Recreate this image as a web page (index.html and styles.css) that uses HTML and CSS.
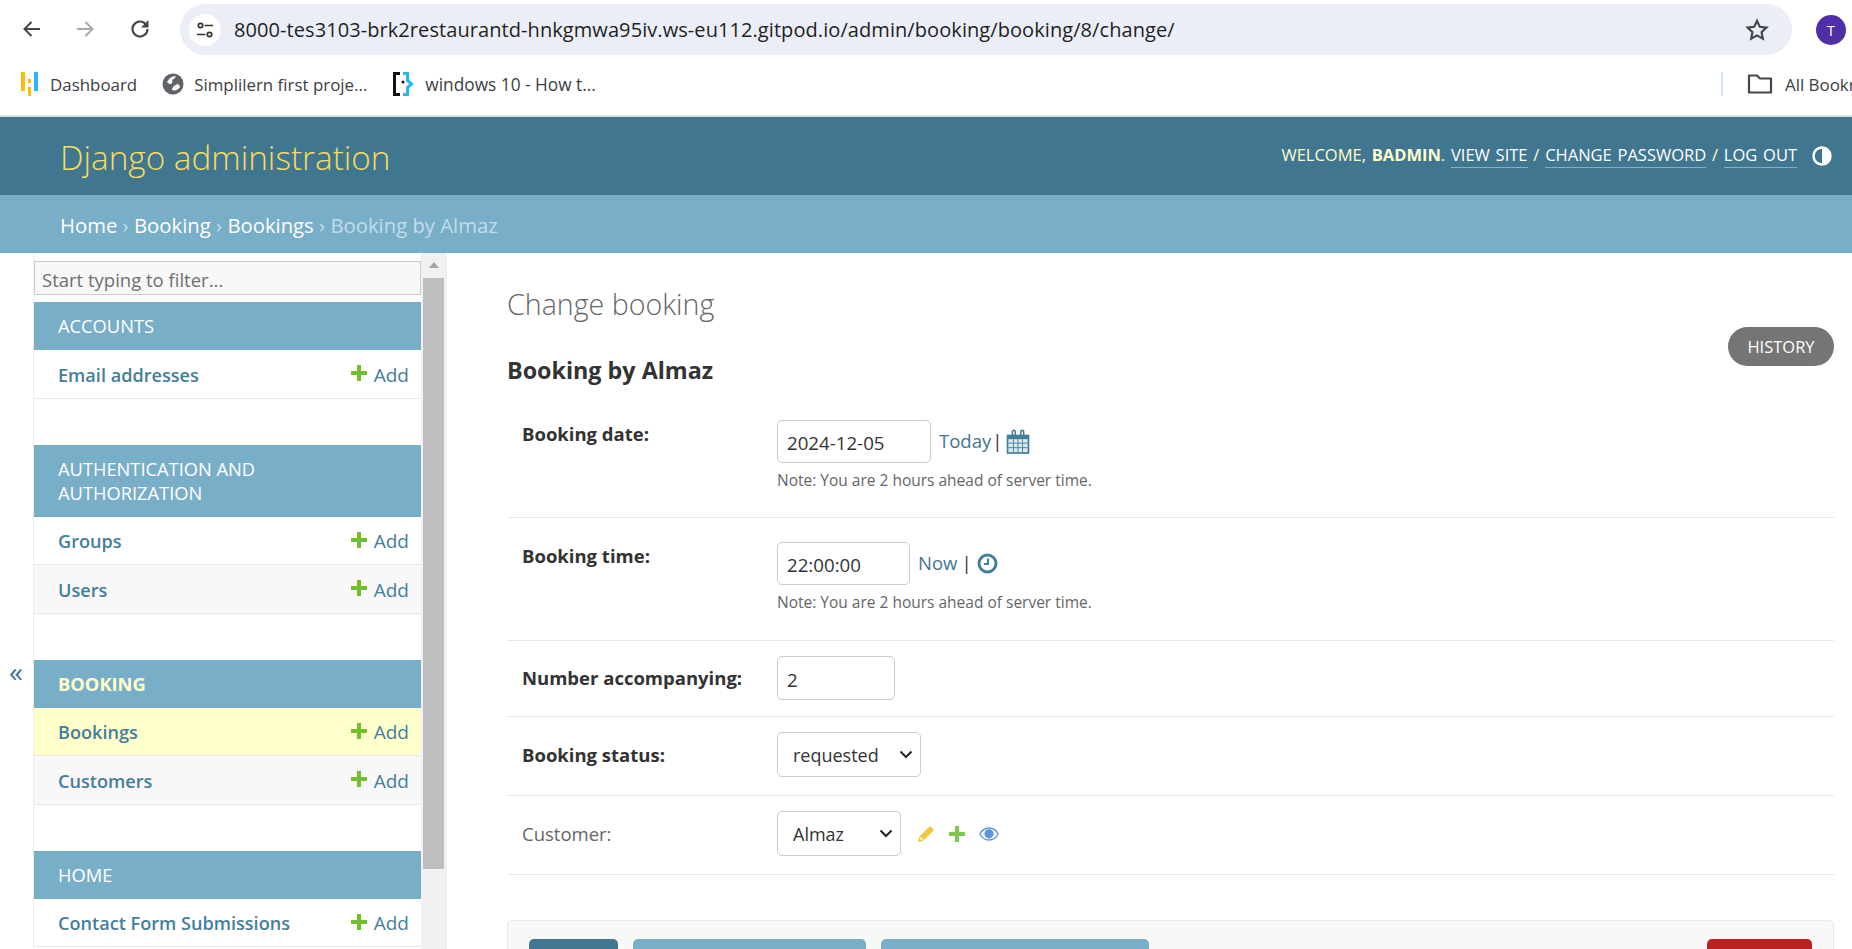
FILE: index.html
```html
<!doctype html>
<html lang="en">
  <head>
    <meta charset="UTF-8" />
    <meta name="viewport" content="width=device-width, initial-scale=1.0" />
    <title>Change booking | Django site admin</title>
    <link rel="stylesheet" href="styles.css">
  </head>
  <body>
    <div class="toolbar">
      <svg class="tool-icon" width="24" height="24" viewBox="0 0 24 24"><path d="M20 12H5M11.5 5L4.5 12l7 7" fill="none" stroke="#474747" stroke-width="2"/></svg>
      <svg class="tool-icon forward" width="24" height="24" viewBox="0 0 24 24"><path d="M4 12h15M12.5 5l7 7-7 7" fill="none" stroke="#a8a8a8" stroke-width="2"/></svg>
      <svg class="tool-icon reload" width="24" height="24" viewBox="0 0 24 24"><path d="M19.5 12a7.5 7.5 0 1 1-2.3-5.4L19 8.5" fill="none" stroke="#474747" stroke-width="2.2"/><path d="M20.5 3v7.5H13z" fill="#474747"/></svg>
      <div class="omnibox">
        <span class="site-btn">
          <svg width="20" height="20" viewBox="0 0 20 20"><g fill="none" stroke="#333" stroke-width="1.7"><circle cx="5.5" cy="5.5" r="2.2"/><circle cx="14.5" cy="14.5" r="2.2"/><path d="M9.5 5.5H18M2 14.5h8.5"/></g></svg>
        </span>
        <span class="url">8000-tes3103-brk2restaurantd-hnkgmwa95iv.ws-eu112.gitpod.io/admin/booking/booking/8/change/</span>
        <svg class="star" width="26" height="26" viewBox="0 0 24 24"><path d="M12 3.5l2.6 5.6 6.1.7-4.5 4.2 1.2 6L12 17l-5.4 3 1.2-6-4.5-4.2 6.1-.7z" fill="none" stroke="#474747" stroke-width="2"/></svg>
      </div>
      <span class="avatar">T</span>
    </div>

    <div class="bookmarks">
      <a class="bookmark dash">
        <svg width="17" height="24" viewBox="0 0 17 24"><rect x="0" y="0" width="4" height="19" fill="#fbbc04"/><rect x="7" y="7" width="3" height="4" fill="#fbbc04"/><rect x="7" y="15" width="3" height="9" fill="#fbbc04"/><rect x="13" y="0" width="4" height="19" fill="#29b6f6"/></svg>
        Dashboard
      </a>
      <a class="bookmark globe">
        <svg width="22" height="22" viewBox="0 0 22 22"><circle cx="11" cy="11" r="10.5" fill="#5f6368"/><path d="M5 9c2-4 5-6 9-6-1 2-2 3-4 4 1 2 0 4-2 4-1 0-2-1-3-2zM10 17c0-3 3-5 6-6 1 1 2 2 2 3-2 3-5 4-8 3z" fill="#fff"/></svg>
        Simplilern first proje...
      </a>
      <a class="bookmark stack">
        <svg width="21" height="24" viewBox="0 0 21 24"><path d="M7 1.5H1.5v21H7" fill="none" stroke="#111" stroke-width="3"/><path d="M10 1.5h4.5v7l4 3.5-4 3.5v7H10" fill="none" stroke="#29b6f6" stroke-width="3"/><circle cx="10" cy="10" r="1.5" fill="#111"/></svg>
        windows 10 - How t...
      </a>
      <span class="bookmark-sep"></span>
      <a class="bookmark all">
        <svg width="26" height="24" viewBox="0 0 26 24"><path d="M2 3.5h8l3 3h11v14H2z" fill="none" stroke="#474747" stroke-width="2.2" stroke-linejoin="round"/></svg>
        All Bookmarks
      </a>
    </div>

    <div class="page">
      <header class="site-header">
        <div class="branding">Django administration</div>
        <div class="user-tools">
          <span>WELCOME, <strong>BADMIN</strong>. <a>VIEW SITE</a> / <a>CHANGE PASSWORD</a> / <a>LOG OUT</a></span>
          <svg class="theme" width="20" height="20" viewBox="0 0 20 20"><circle cx="10" cy="10" r="8.5" fill="none" stroke="#fff" stroke-width="2.5"/><path d="M10 1.5a8.5 8.5 0 0 1 0 17z" fill="#fff"/></svg>
        </div>
      </header>
      <nav class="breadcrumbs">
        <a>Home</a> <i>›</i> <a>Booking</a> <i>›</i> <a>Bookings</a> <i>›</i> Booking by Almaz
      </nav>

      <div class="main">
        <div class="toggle"><a>«</a></div>

        <aside class="sidebar">
          <div class="sidebar-list">
            <input class="filter" placeholder="Start typing to filter...">

            <div class="app">
              <div class="app-title">ACCOUNTS</div>
              <div class="model"><a>Email addresses</a><span class="add"><svg class="plus" viewBox="0 0 16 16"><path d="M6 0h4v6h6v4h-6v6H6v-6H0V6h6z"/></svg>Add</span></div>
            </div>

            <div class="app">
              <div class="app-title">AUTHENTICATION AND AUTHORIZATION</div>
              <div class="model"><a>Groups</a><span class="add"><svg class="plus" viewBox="0 0 16 16"><path d="M6 0h4v6h6v4h-6v6H6v-6H0V6h6z"/></svg>Add</span></div>
              <div class="model alt"><a>Users</a><span class="add"><svg class="plus" viewBox="0 0 16 16"><path d="M6 0h4v6h6v4h-6v6H6v-6H0V6h6z"/></svg>Add</span></div>
            </div>

            <div class="app">
              <div class="app-title current">BOOKING</div>
              <div class="model selected"><a>Bookings</a><span class="add"><svg class="plus" viewBox="0 0 16 16"><path d="M6 0h4v6h6v4h-6v6H6v-6H0V6h6z"/></svg>Add</span></div>
              <div class="model alt"><a>Customers</a><span class="add"><svg class="plus" viewBox="0 0 16 16"><path d="M6 0h4v6h6v4h-6v6H6v-6H0V6h6z"/></svg>Add</span></div>
            </div>

            <div class="app">
              <div class="app-title">HOME</div>
              <div class="model"><a>Contact Form Submissions</a><span class="add"><svg class="plus" viewBox="0 0 16 16"><path d="M6 0h4v6h6v4h-6v6H6v-6H0V6h6z"/></svg>Add</span></div>
            </div>
          </div>
          <div class="scrollbar">
            <div class="scroll-arrow"></div>
            <div class="scroll-thumb"></div>
          </div>
        </aside>

        <main class="content">
          <div class="title-row">
            <div>
              <h1>Change booking</h1>
              <h2>Booking by Almaz</h2>
            </div>
            <a class="history">HISTORY</a>
          </div>

          <form>
            <div class="form-row tall first">
              <label class="required">Booking date:</label>
              <div>
                <div class="widget">
                  <input class="date-input" value="2024-12-05">
                  <span class="shortcuts">
                    <a>Today</a> <b>|</b>
                    <svg class="cal" width="26" height="26" viewBox="0 0 22 23"><path d="M1 5h20v17H1z" fill="#447e9b"/><rect x="2.5" y="9" width="17" height="11.5" fill="#dbe8ee"/><path d="M7 9v11.5M11 9v11.5M15 9v11.5M2.5 12.5h17M2.5 16.5h17" stroke="#447e9b" stroke-width=".8"/><path d="M6 6V2.5a1.3 1.3 0 0 1 2.6 0V6M13.4 6V2.5a1.3 1.3 0 0 1 2.6 0V6" fill="none" stroke="#447e9b" stroke-width="1.4"/></svg>
                  </span>
                </div>
                <p class="help">Note: You are 2 hours ahead of server time.</p>
              </div>
            </div>

            <div class="form-row tall">
              <label class="required">Booking time:</label>
              <div>
                <div class="widget">
                  <input class="time-input" value="22:00:00">
                  <span class="shortcuts">
                    <a>Now</a> <b>|</b>
                    <svg class="clock" width="21" height="21" viewBox="0 0 21 21"><circle cx="10.5" cy="10.5" r="8.5" fill="#fff" stroke="#447e9b" stroke-width="3"/><path d="M11 5.5V11H7" fill="none" stroke="#447e9b" stroke-width="2"/></svg>
                  </span>
                </div>
                <p class="help">Note: You are 2 hours ahead of server time.</p>
              </div>
            </div>

            <div class="form-row">
              <label class="required">Number accompanying:</label>
              <input class="number-input" value="2">
            </div>

            <div class="form-row select-row">
              <label class="required">Booking status:</label>
              <select class="status-select"><option>requested</option></select>
            </div>

            <div class="form-row select-row">
              <label>Customer:</label>
              <div class="widget">
                <select class="customer-select"><option>Almaz</option></select>
                <span class="related">
                  <svg width="18" height="18" viewBox="0 0 18 18"><path d="M13 1l4 4L6 16l-5 1 1-5z" fill="#efb80b" opacity=".8"/><path d="M3 12.5L5.5 15" stroke="#fff" stroke-width="1.5"/></svg>
                  <svg width="16" height="16" viewBox="0 0 16 16"><path d="M6 0h4v6h6v4h-6v6H6v-6H0V6h6z" fill="#7ec850"/></svg>
                  <svg width="20" height="14" viewBox="0 0 20 14"><path d="M.7 7C3 3 6 1 10 1s7 2 9.3 6C17 11 14 13 10 13S3 11 .7 7z" fill="none" stroke="#5a94d8" stroke-width="1.3"/><circle cx="10" cy="6.8" r="4.6" fill="#5a94d8"/></svg>
                </span>
              </div>
            </div>

            <div class="submit-row">
              <a class="btn default">SAVE</a>
              <a class="btn save-add">Save and add another</a>
              <a class="btn save-edit">Save and continue editing</a>
              <a class="btn delete">Delete</a>
            </div>
          </form>
        </main>
      </div>
    </div>
  </body>
</html>
```

FILE: styles.css
```css
* {
  box-sizing: border-box;
}
html, body {
  height: 100%;
}
body {
  margin: 0;
  height: 949px;
  overflow: hidden;
  background: #fff;
  color: #333;
  font-family: "Open Sans", "Noto Sans", Arial, sans-serif;
  display: flex;
  flex-direction: column;
}
a {
  color: #417690;
  text-decoration: none;
}
svg {
  flex-shrink: 0;
}

/* browser chrome */
.toolbar {
  height: 58px;
  padding: 4px 6px 0 20px;
  display: flex;
  align-items: flex-start;
}
.tool-icon {
  margin-top: 13px;
}
.forward {
  margin-left: 29px;
}
.reload {
  margin-left: 31px;
}
.omnibox {
  margin-left: 28px;
  width: 1612px;
  height: 51px;
  background: #ebeef7;
  border-radius: 26px;
  padding: 0 22px 0 9px;
  display: flex;
  align-items: center;
}
.site-btn {
  width: 32px;
  height: 32px;
  border-radius: 50%;
  background: #fff;
  display: flex;
  align-items: center;
  justify-content: center;
}
.url {
  margin-left: 13px;
  font-size: 20px;
  color: #1f1f1f;
  letter-spacing: 0.075px;
  white-space: nowrap;
}
.star {
  margin-left: auto;
}
.avatar {
  margin-left: 24px;
  margin-top: 11px;
  width: 30px;
  height: 30px;
  border-radius: 50%;
  background: #512da8;
  color: #fff;
  font-size: 15px;
  line-height: 30px;
  text-align: center;
}
.bookmarks {
  height: 59px;
  padding-left: 21px;
  padding-bottom: 5px;
  border-bottom: 2px solid #e0e0e0;
  display: flex;
  align-items: center;
  white-space: nowrap;
  overflow: hidden;
}
.bookmark {
  display: flex;
  align-items: center;
  gap: 12px;
  font-size: 16.9px;
  color: #3c4043;
}
.globe {
  margin-left: 25px;
  gap: 10px;
}
.stack {
  margin-left: 26px;
  gap: 11px;
  font-size: 17.3px;
}
.bookmark-sep {
  margin-left: auto;
  width: 2px;
  height: 24px;
  background: #d3e3fd;
}
.all {
  margin-left: 24px;
  width: 105px;
  flex-shrink: 0;
}

/* django header */
.page {
  flex: 1;
  min-height: 0;
  display: flex;
  flex-direction: column;
}
.site-header {
  height: 78px;
  padding: 0 20px 0 60px;
  background: #417690;
  display: flex;
  align-items: center;
  justify-content: space-between;
  flex-shrink: 0;
}
.branding {
  font-size: 33.3px;
  font-weight: 300;
  color: #f5dd5d;
  margin-top: 2px;
}
.user-tools {
  font-size: 16.5px;
  word-spacing: 1.5px;
  color: #ffc;
  display: flex;
  align-items: center;
  white-space: nowrap;
  margin-top: -4px;
}
.user-tools a {
  color: #fff;
  padding-bottom: 1px;
  border-bottom: 1px solid rgba(255, 255, 255, 0.4);
}
.theme {
  margin-left: 15px;
  margin-top: 4px;
}
.breadcrumbs {
  height: 58px;
  padding-left: 60px;
  background: #79aec8;
  color: #c4dce8;
  font-size: 20.3px;
  line-height: 60px;
  flex-shrink: 0;
}
.breadcrumbs a {
  color: #fff;
}
.breadcrumbs i {
  font-style: normal;
}

.main {
  flex: 1;
  min-height: 0;
  display: flex;
}
.toggle {
  width: 33px;
  padding: 400px 0 0 9px;
  font-size: 28px;
  line-height: 36px;
}

/* sidebar */
.sidebar {
  width: 414px;
  flex-shrink: 0;
  display: flex;
  border-left: 1px solid #eee;
  border-right: 1px solid #eee;
  overflow: hidden;
}
.sidebar-list {
  width: 387px;
  flex-shrink: 0;
}
.filter {
  display: block;
  width: 100%;
  height: 34px;
  margin-top: 8px;
  padding: 2px 7px 0;
  background: #f8f8f8;
  border: 1px solid #ccc;
  font-family: inherit;
  font-size: 18.5px;
}
.filter::placeholder {
  color: #6f6f6f;
}
.app {
  margin-bottom: 46px;
}
.filter + .app {
  margin-top: 7px;
}
.app-title {
  padding: 12px 32px 12px 24px;
  background: #79aec8;
  color: #fff;
  font-size: 18.3px;
  line-height: 24px;
}
.app-title.current {
  color: #ffc;
  font-weight: bold;
}
.model {
  height: 48.5px;
  padding: 2px 12px 0 24px;
  border-bottom: 1px solid #e8e8e8;
  display: flex;
  align-items: center;
  justify-content: space-between;
  font-size: 18.1px;
}
.model.alt {
  background: #f8f8f8;
}
.model.selected {
  background: #ffc;
}
.model > a {
  font-weight: 600;
  color: #447e9b;
}
.add {
  display: flex;
  align-items: center;
  gap: 7px;
  font-size: 19px;
  color: #447e9b;
}
.plus {
  width: 16px;
  height: 16px;
  fill: #70bf2b;
  margin-top: -3px;
}
.scrollbar {
  flex: 1;
  background: #f1f1f1;
  padding: 0 2px;
}
.scroll-arrow {
  width: 0;
  margin: 9px auto 10px;
  border-left: 5px solid transparent;
  border-right: 5px solid transparent;
  border-bottom: 6px solid #a3a3a3;
}
.scroll-thumb {
  height: 591px;
  background: #bebebe;
}

/* content */
.content {
  flex: 1;
  min-width: 0;
  padding: 0 18px 0 60px;
}
.title-row {
  display: flex;
  justify-content: space-between;
  align-items: flex-start;
}
h1 {
  margin: 33px 0 0;
  font-size: 28.6px;
  line-height: 36px;
  font-weight: 300;
  color: #666;
}
h2 {
  margin: 33px 0 0;
  font-size: 23.3px;
  line-height: 30px;
  font-weight: 700;
  color: #333;
}
.history {
  margin-top: 74px;
  width: 106px;
  height: 39px;
  border-radius: 20px;
  background: #757575;
  color: #fff;
  font-size: 16.5px;
  line-height: 39px;
  text-align: center;
}
form {
  margin-top: 11px;
}
.form-row {
  display: grid;
  grid-template-columns: 270px 1fr;
  align-items: center;
  justify-items: start;
  padding: 15px 0 16px 15px;
  border-bottom: 1px solid #e8e8e8;
}
.form-row.select-row {
  padding-bottom: 18px;
}
.form-row.tall {
  align-items: start;
  padding: 24px 0 28px 15px;
}
.form-row.first {
  padding-bottom: 27px;
}
.form-row > :first-child {
  width: 255px;
}
.form-row > div {
  margin-left: -15px;
}
.form-row > input, .form-row > select {
  margin-left: -15px;
}
label {
  font-size: 18.5px;
  line-height: 28px;
  color: #666;
}
label.required {
  font-weight: 700;
  color: #333;
}
input, select {
  font-family: inherit;
  color: #333;
  font-size: 18.7px;
}
.date-input, .time-input, .number-input {
  height: 43px;
  padding: 2px 9px 0;
  border: 1px solid #ccc;
  border-radius: 5px;
  background: #fff;
}
.date-input {
  width: 154px;
}
.time-input {
  width: 133px;
}
.number-input {
  width: 118px;
  height: 44px;
}
select {
  height: 45px;
  padding: 0 15px;
  font-size: 18px;
  border: 1px solid #ccc;
  border-radius: 5px;
  appearance: none;
  background: #fff url("data:image/svg+xml,%3Csvg xmlns='http://www.w3.org/2000/svg' width='14' height='9'%3E%3Cpath d='M1.5 1.5L7 7l5.5-5.5' fill='none' stroke='%23222' stroke-width='2'/%3E%3C/svg%3E") no-repeat right 7px center;
}
.status-select {
  width: 144px;
}
.customer-select {
  width: 124px;
}
.widget {
  display: flex;
  align-items: center;
}
.shortcuts {
  margin-left: 8px;
  display: flex;
  align-items: center;
  gap: 1px;
  font-size: 18.5px;
  margin-bottom: 3px;
}
.shortcuts b {
  font-weight: 400;
  color: #333;
}
.time-input + .shortcuts b {
  margin-left: 3px;
}
.cal, .clock {
  margin-left: 2px;
  margin-top: 3px;
}
.clock {
  margin-left: 4px;
}
.help {
  margin: 7px 0 0;
  font-size: 15.5px;
  line-height: 20px;
  color: #666;
}
.related {
  margin-left: 16px;
  display: flex;
  align-items: center;
  gap: 14px;
}
.submit-row {
  margin-top: 45px;
  padding: 18px 21px;
  background: #f8f8f8;
  border: 1px solid #e8e8e8;
  border-radius: 5px;
  display: flex;
  gap: 15px;
}
.btn {
  height: 48px;
  padding-top: 14px;
  border-radius: 5px;
  color: #fff;
  font-size: 16px;
  line-height: 22px;
  text-align: center;
}
.default {
  width: 89px;
  background: #417690;
  font-weight: 700;
}
.save-add {
  width: 233px;
  background: #79aec8;
}
.save-edit {
  width: 268px;
  background: #79aec8;
}
.delete {
  width: 105px;
  margin-left: auto;
  background: #ba2121;
}
```
